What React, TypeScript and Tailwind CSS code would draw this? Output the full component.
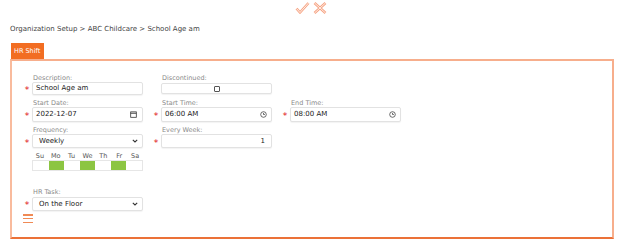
import React from "react";

const font = { fontFamily: '"DejaVu Sans", Verdana, sans-serif' };

function Star() {
  return (
    <span className="w-[10px] shrink-0 text-center text-[9px] leading-none text-[#e01010] pt-[4px]">
      *
    </span>
  );
}

function Field({
  label,
  required = true,
  children,
  inputClass = "h-[15px]",
}: {
  label: string;
  required?: boolean;
  children: React.ReactNode;
  inputClass?: string;
}) {
  return (
    <div className="w-[122px] flex flex-col">
      <div className="h-[8px] pl-[11px] text-[6.5px] leading-[8px] text-[#8a8a8a]">{label}</div>
      <div className="flex items-center">
        {required ? <Star /> : <span className="w-[10px] shrink-0" />}
        <div
          className={`w-[111px] ${inputClass} flex items-center px-[3px] bg-white border border-[#e2e2e2] rounded-[2px] shadow-[0_1px_1px_rgba(0,0,0,0.05)] text-[7px] text-[#222]`}
        >
          {children}
        </div>
      </div>
    </div>
  );
}

function Chevron() {
  return (
    <svg width="6" height="4" viewBox="0 0 6 4" className="ml-auto mr-[1px]">
      <path d="M0.8 0.8 L3 3 L5.2 0.8" fill="none" stroke="#333" strokeWidth="1.1" />
    </svg>
  );
}

function Clock() {
  return (
    <svg width="7" height="7" viewBox="0 0 8 8" className="ml-auto mr-[1px]">
      <circle cx="4" cy="4" r="3.2" fill="none" stroke="#444" strokeWidth="0.9" />
      <path d="M4 2.2 V4 H5.6" fill="none" stroke="#444" strokeWidth="0.9" />
    </svg>
  );
}

function Calendar() {
  return (
    <svg width="7" height="7" viewBox="0 0 8 8" className="ml-auto mr-[2px]">
      <rect x="0.8" y="1" width="6.4" height="6.2" fill="none" stroke="#333" strokeWidth="0.9" />
      <path d="M0.8 2.6 H7.2" stroke="#333" strokeWidth="1" />
    </svg>
  );
}

const days = [
  { d: "Su", on: false },
  { d: "Mo", on: true },
  { d: "Tu", on: false },
  { d: "We", on: true },
  { d: "Th", on: false },
  { d: "Fr", on: true },
  { d: "Sa", on: false },
];

export default function App() {
  return (
    <div className="w-[626px] h-[244px] bg-white overflow-hidden" style={font}>
      <div className="h-[16px] flex justify-center items-start pt-[2px] gap-[3px] pr-[4px]">
        <svg width="15" height="12" viewBox="0 0 15 12">
          <path d="M1.5 6.5 L5 10.5 L13.5 1" fill="none" stroke="#f6a382" strokeWidth="2.6" strokeLinejoin="round" />
          <path d="M1.5 6.5 L5 10.5 L13.5 1" fill="none" stroke="#fff" strokeWidth="0.8" />
        </svg>
        <svg width="14" height="12" viewBox="0 0 14 12">
          <path d="M1.5 1 L12.5 11 M12.5 1 L1.5 11" fill="none" stroke="#f6a382" strokeWidth="2.6" />
          <path d="M1.5 1 L12.5 11 M12.5 1 L1.5 11" fill="none" stroke="#fff" strokeWidth="0.8" />
        </svg>
      </div>

      <div className="px-[10px] pt-[9px] text-[7px] leading-[8px] text-[#444]">
        Organization Setup &gt; ABC Childcare &gt; School Age am
      </div>

      <div className="px-[10px] mt-[10px]">
        <div className="ml-[1px] w-[33px] h-[16px] bg-[#f26d22] text-white text-[6.5px] leading-[16px] pl-[3px]">
          HR Shift
        </div>
        <div className="w-[604px] h-[180px] border-2 border-t-[#f7ae8c] border-r-[#f7ae8c] border-l-[#f9bb9d] border-b-[#eb7138] pl-[10px] pt-[13px]">
          <div className="flex gap-x-[7px]">
            <Field label="Description:" inputClass="h-[13px]">
              School Age am
            </Field>
            <Field label="Discontinued:" required={false} inputClass="h-[11px] mt-[1px] justify-center">
              <span className="w-[6px] h-[6px] border border-[#555] rounded-[1px]" />
            </Field>
          </div>

          <div className="flex gap-x-[7px] mt-[4px]">
            <Field label="Start Date:">
              2022-12-07
              <Calendar />
            </Field>
            <Field label="Start Time:">
              06:00 AM
              <Clock />
            </Field>
            <Field label="End Time:">
              08:00 AM
              <Clock />
            </Field>
          </div>

          <div className="flex gap-x-[7px] mt-[4px]">
            <Field label="Frequency:" inputClass="h-[14px]">
              <span className="pl-[3px]">Weekly</span>
              <Chevron />
            </Field>
            <Field label="Every Week:" inputClass="h-[14px] justify-end">
              <span className="pr-[3px]">1</span>
            </Field>
          </div>

          <div className="ml-[10px] mt-[4px] w-[111px]">
            <div className="grid grid-cols-7 h-[8px] text-[6.5px] leading-[8px] text-[#555] text-center">
              {days.map((x) => (
                <span key={x.d}>{x.d}</span>
              ))}
            </div>
            <div className="grid grid-cols-7 h-[11px] border border-[#e6e6e6]">
              {days.map((x) => (
                <span key={x.d} className={`mx-[0.5px] ${x.on ? "bg-[#8cc542]" : "bg-white"}`} />
              ))}
            </div>
          </div>

          <div className="mt-[17px]">
            <Field label="HR Task:" inputClass="h-[14px] mt-[1px]">
              <span className="pl-[3px]">On the Floor</span>
              <Chevron />
            </Field>
          </div>

          <div className="mt-[3px] ml-[1px] w-[10px] h-[9px] flex flex-col justify-between">
            <span className="h-[1.5px] bg-[#f08a55]" />
            <span className="h-[1.5px] bg-[#f08a55]" />
            <span className="h-[1.5px] bg-[#f08a55]" />
          </div>
        </div>
      </div>
    </div>
  );
}
